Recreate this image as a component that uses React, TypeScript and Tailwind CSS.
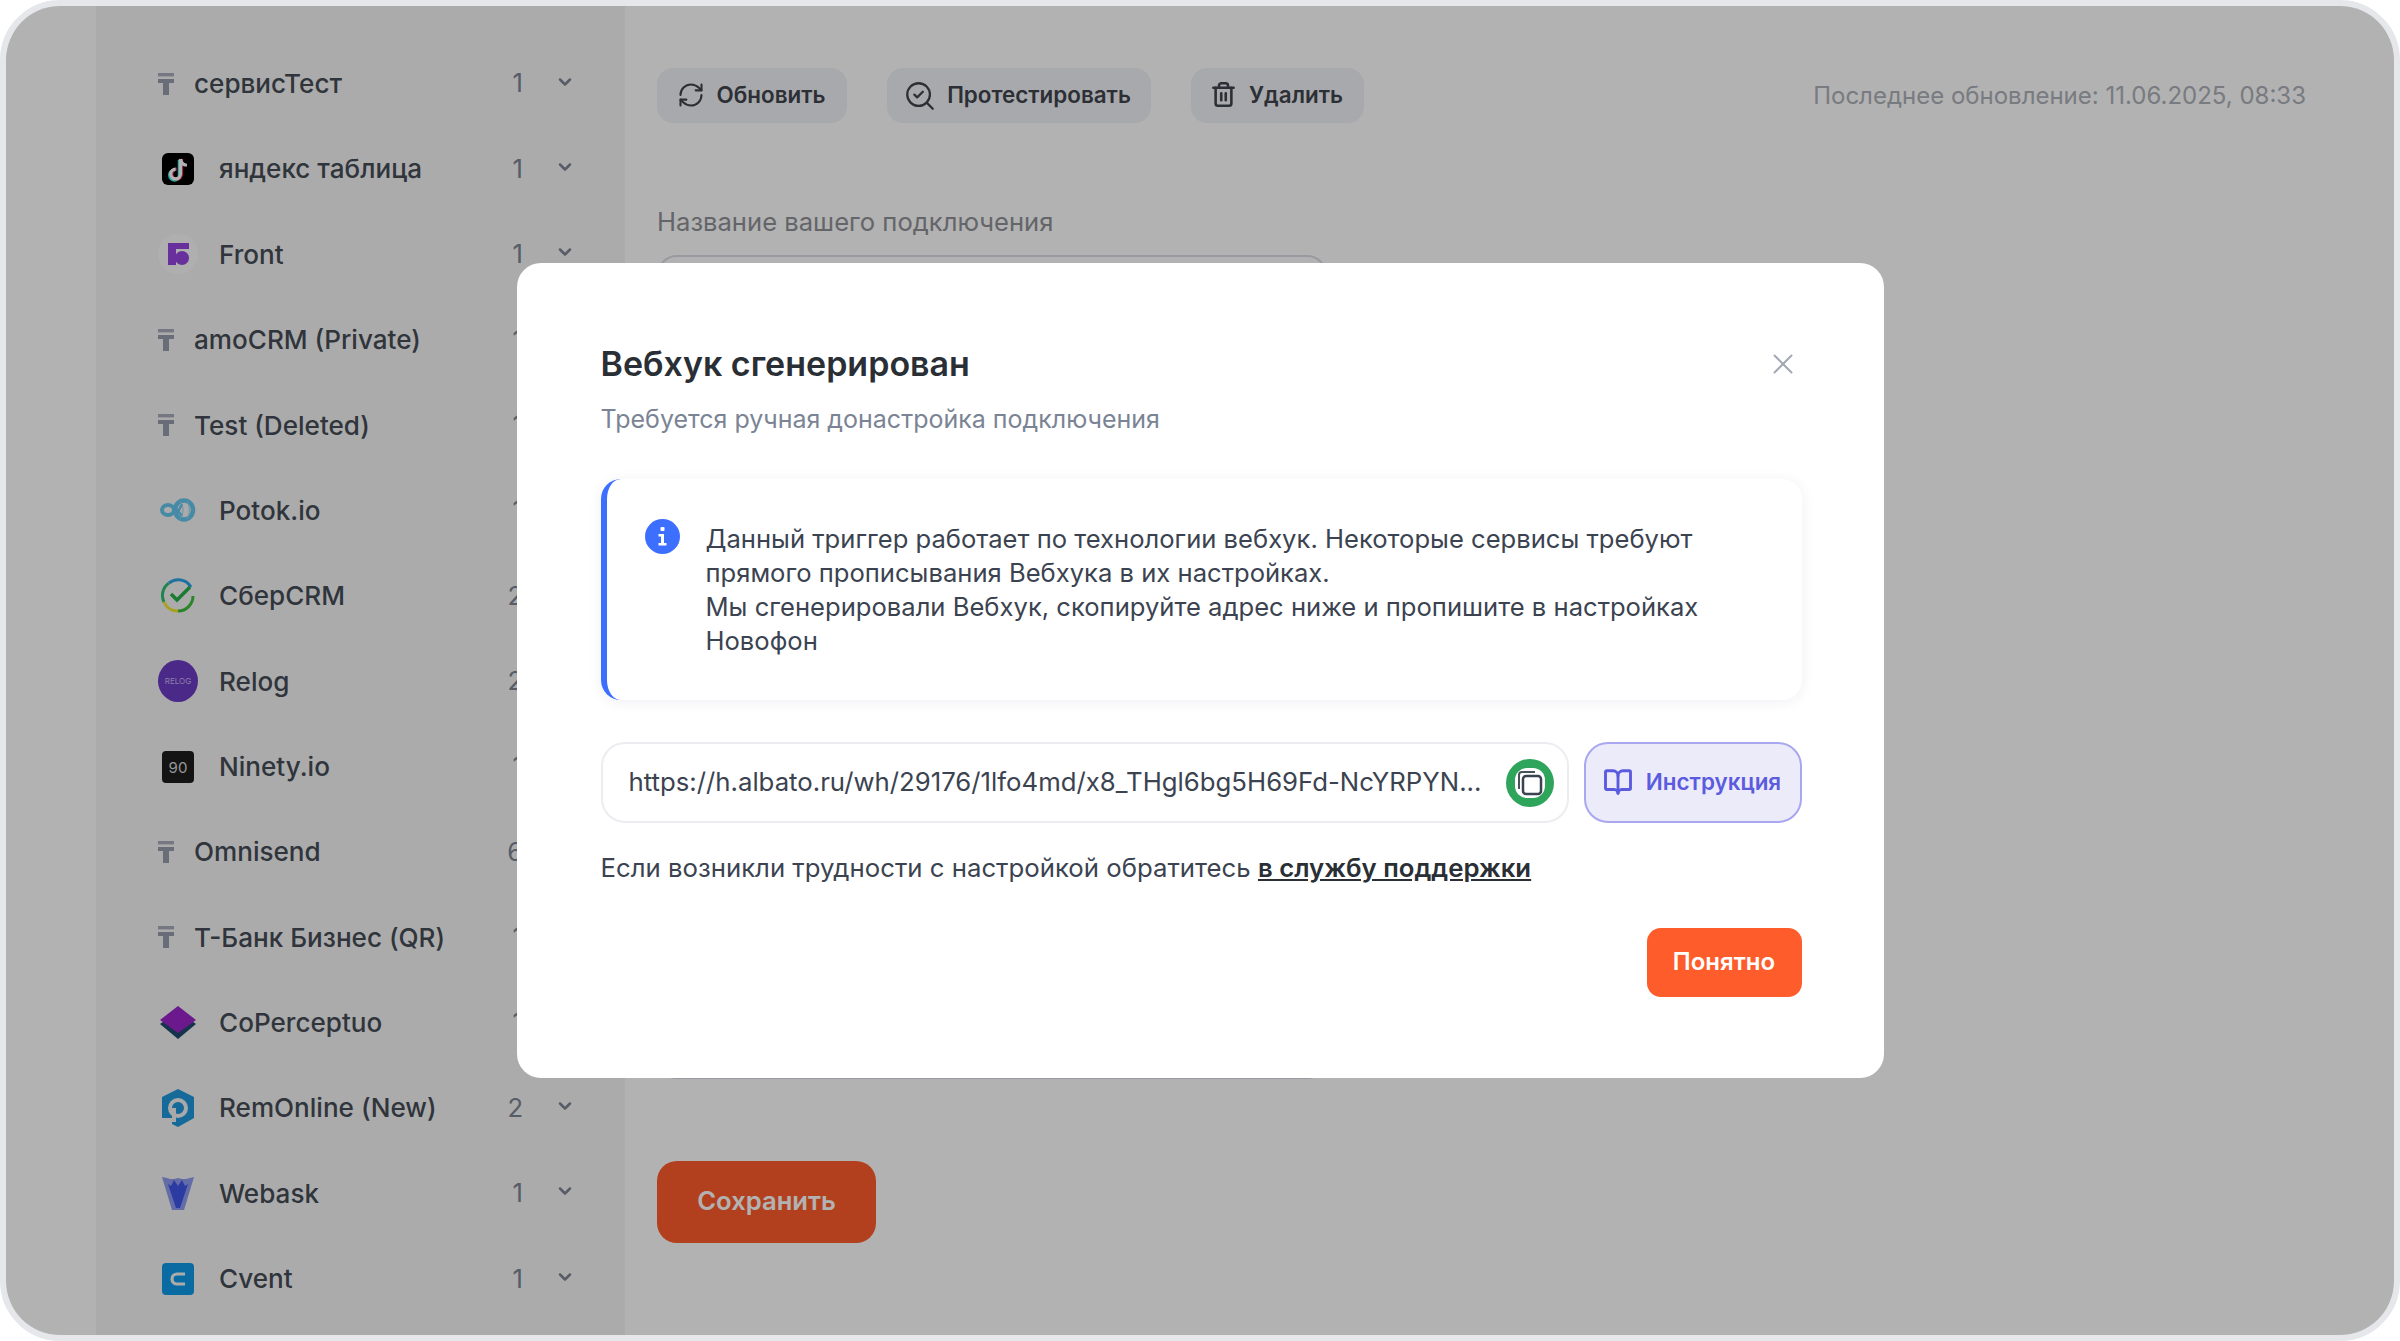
import React from "react";
import { RefreshCw, SearchCheck, Trash2, BookOpen, X, ChevronDown } from "lucide-react";

const TIcon = () => (
  <svg width="16" height="22" viewBox="0 0 16 22" className="shrink-0 mr-[4px]">
    <rect x="0" y="0" width="16" height="3.4" fill="#a8adbb" />
    <rect x="0" y="6" width="16" height="4" fill="#969cad" />
    <rect x="5" y="6" width="6" height="16" fill="#969cad" />
  </svg>
);

const TikTok = () => (
  <svg width="32" height="32" viewBox="0 0 32 32">
    <rect width="32" height="32" rx="6" fill="#000" />
    <g transform="translate(-1 -0.5) scale(1.08)">
      <path d="M18 6v14a4.5 4.5 0 1 1-4.5-4.5" fill="none" stroke="#25f4ee" strokeWidth="3" transform="translate(-1 1)" />
      <path d="M18 6v14a4.5 4.5 0 1 1-4.5-4.5" fill="none" stroke="#fe2c55" strokeWidth="3" transform="translate(1 0)" />
      <path d="M18 6v14a4.5 4.5 0 1 1-4.5-4.5" fill="none" stroke="#fff" strokeWidth="3" />
      <path d="M18 6c.5 3.5 3 5.500 6 5.800" fill="none" stroke="#fff" strokeWidth="3" />
    </g>
  </svg>
);

const Front = () => (
  <svg width="40" height="40" viewBox="0 0 40 40">
    <circle cx="20" cy="20" r="20" fill="#fbfbfb" />
    <path d="M10 9h21v6h-13v16h-8z" fill="#9645e0" />
    <circle cx="24" cy="24" r="7" fill="#9645e0" />
  </svg>
);

const Potok = () => (
  <svg width="36" height="24" viewBox="0 0 36 24" fill="none" stroke="#66c6ee">
    <ellipse cx="8" cy="12" rx="6" ry="5" strokeWidth="4" />
    <ellipse cx="24" cy="12" rx="9" ry="9.500" strokeWidth="4.500" />
    <path d="M14 8l8 10M22 6l-6 12" strokeWidth="2.500" />
    <path d="M20 3c4 5 4 13 0 18M27 3c3 5 3 13 0 18" stroke="#8fd8f4" strokeWidth="1" />
  </svg>
);

const Sber = () => (
  <svg width="34" height="36" viewBox="0 0 34 36" fill="none">
    <path d="M30 9A15 15 0 0 0 8 5" stroke="#2aa4e8" strokeWidth="3" />
    <path d="M8 5A15 15 0 0 0 3 24" stroke="#2fbf71" strokeWidth="3" />
    <path d="M3 24A15 15 0 0 0 17 33" stroke="#f2e52b" strokeWidth="3" />
    <path d="M17 33A15 15 0 0 0 32 18" stroke="#3fbe3d" strokeWidth="3" />
    <path d="M10 16l6 6L29 9" stroke="#26b14a" strokeWidth="3.500" />
  </svg>
);

const Relog = () => (
  <svg width="40" height="42" viewBox="0 0 40 42">
    <ellipse cx="20" cy="21" rx="20" ry="21" fill="#6b3cc4" />
    <text x="20" y="24" textAnchor="middle" fontSize="8" fill="#c9b6ee" fontFamily="Inter, sans-serif">RELOG</text>
  </svg>
);

const Ninety = () => (
  <svg width="32" height="32" viewBox="0 0 32 32">
    <rect width="32" height="32" rx="4" fill="#1d1d1d" />
    <text x="16" y="22" textAnchor="middle" fontSize="15" fill="#d8d8d8" fontFamily="Inter, sans-serif">90</text>
  </svg>
);

const CoPerceptuo = () => (
  <svg width="38" height="33" viewBox="0 0 38 33">
    <path d="M19 5L37 18 19 33 1 18z" fill="#1f4a6e" />
    <path d="M19 0L37 14 19 27 1 14z" fill="#9a24c9" />
  </svg>
);

const RemOnline = () => (
  <svg width="34" height="38" viewBox="0 0 34 38">
    <path d="M17 0L33 8v21l-16 9-6-3v-6l-10 0V8z" fill="#1f98dc" />
    <circle cx="17" cy="19" r="8" fill="none" stroke="#f2f2f2" strokeWidth="4" />
    <path d="M13 19v14" stroke="#f2f2f2" strokeWidth="4" />
    <circle cx="17" cy="19" r="2" fill="#1f98dc" />
  </svg>
);

const Webask = () => (
  <svg width="32" height="34" viewBox="0 0 32 34">
    <path d="M0 1l5 1 3 1 4 0 4-1 4 1 4 0 8-2-10 33h-12z" fill="#8f9bf0" />
    <path d="M6 8l3 2 3-6 4 6 4-6 3 6 3-2-8 24h-4z" fill="#3f55e8" />
  </svg>
);

const Cvent = () => (
  <svg width="32" height="32" viewBox="0 0 32 32">
    <rect width="32" height="32" rx="4" fill="#0d9ae8" />
    <path d="M23 11h-8a5 5 0 0 0 0 10h8" fill="none" stroke="#f5f5f5" strokeWidth="3.200" />
  </svg>
);

const rows: { name: string; count: string; icon?: React.ReactNode }[] = [
  { name: "сервисТест", count: "1" },
  { name: "яндекс таблица", count: "1", icon: <TikTok /> },
  { name: "Front", count: "1", icon: <Front /> },
  { name: "amoCRM (Private)", count: "1" },
  { name: "Test (Deleted)", count: "1" },
  { name: "Potok.io", count: "1", icon: <Potok /> },
  { name: "СберCRM", count: "2", icon: <Sber /> },
  { name: "Relog", count: "2", icon: <Relog /> },
  { name: "Ninety.io", count: "1", icon: <Ninety /> },
  { name: "Omnisend", count: "6" },
  { name: "Т-Банк Бизнес (QR)", count: "1" },
  { name: "CoPerceptuo", count: "1", icon: <CoPerceptuo /> },
  { name: "RemOnline (New)", count: "2", icon: <RemOnline /> },
  { name: "Webask", count: "1", icon: <Webask /> },
  { name: "Cvent", count: "1", icon: <Cvent /> },
];

const ToolButton = ({ icon, label, w }: { icon: React.ReactNode; label: string; w: string }) => (
  <button className={`flex h-[55px] items-center justify-center gap-[14px] rounded-[16px] bg-[#f1f3f6] pb-[2px] text-[22.4px] font-semibold text-[#3f444c] ${w}`}>
    {icon}
    {label}
  </button>
);

export default function App() {
  return (
    <div className="h-[1341px] w-[2400px] bg-white font-['Inter',sans-serif]">
      <div className="relative flex h-[1341px] w-[2400px] overflow-hidden rounded-[60px] border-[6px] border-[#e6e7eb] bg-white">
        <div className="w-[90px] shrink-0" />
        <aside className="flex w-[529px] shrink-0 flex-col bg-[#f5f5f5] pt-[35px]">
          {rows.map((r) => (
            <div key={r.name} className="flex h-[85.36px] shrink-0 items-center pl-[62px] pr-[50px]">
              {r.icon ? (
                <div className="mr-[21px] flex h-[40px] w-[40px] shrink-0 items-center justify-center">{r.icon}</div>
              ) : (
                <div className="mr-[16px] flex shrink-0 items-center"><TIcon /></div>
              )}
              <span className="flex-1 whitespace-nowrap text-[26.1px] font-medium text-[#454c57]">{r.name}</span>
              <span className="text-[25.6px] text-[#7d8494]">{r.count}</span>
              <ChevronDown size={20} strokeWidth={3} className="mb-[4px] ml-[32px] text-[#7d8494]" />
            </div>
          ))}
        </aside>
        <main className="flex min-w-0 flex-1 flex-col pl-[32px] pr-[88px] pt-[62px]">
          <header className="flex items-center justify-between">
            <div className="flex gap-[40px]">
              <ToolButton w="w-[190px]" icon={<RefreshCw size={28} strokeWidth={1.800} className="-mx-[2px]" />} label="Обновить" />
              <ToolButton w="w-[264px]" icon={<SearchCheck size={34} strokeWidth={1.600} className="-mx-[4px] mt-[2px]" />} label="Протестировать" />
              <ToolButton w="w-[173px]" icon={<Trash2 size={27} strokeWidth={2.300} className="-mx-[2px]" />} label="Удалить" />
            </div>
            <span className="text-[24px] text-[#adb0b8]">Последнее обновление: 11.06.2025, 08:33</span>
          </header>
          <label className="mt-[82px] text-[25.6px] leading-[34px] text-[#8f9197]">Название вашего подключения</label>
          <div className="mt-[16px] h-[824px] w-[670px] shrink-0 rounded-[20px] border-2 border-[#dcdce6]" />
          <button className="mt-[82px] h-[82px] w-[219px] rounded-[20px] bg-[#ff5c2b] pb-[2px] text-[25.6px] font-semibold text-white">Сохранить</button>
        </main>
        <div className="absolute inset-0 flex items-center justify-center bg-black/30">
          <div className="w-[1367px] rounded-[24px] bg-white pb-[81px] pl-[84px] pr-[82px] pt-[78px]">
            <div className="flex h-[44px] items-center justify-between">
              <h2 className="text-[34px] font-semibold text-[#2a2f36]">Вебхук сгенерирован</h2>
              <X size={34} strokeWidth={1.400} className="mr-[2px] mt-[2px] text-[#a3a8b4]" />
            </div>
            <p className="mt-[17px] text-[25px] leading-[34px] text-[#7b8494]">Требуется ручная донастройка подключения</p>
            <div className="mt-[43px] flex h-[221px] rounded-[20px] border-l-[6px] border-[#3d6fff] pl-[38px] pr-[50px] pt-[40px] shadow-[0_2px_14px_rgba(30,40,80,0.07)]">
              <svg width="35" height="35" viewBox="0 0 35 35" className="shrink-0">
                <circle cx="17.500" cy="17.500" r="17.500" fill="#3d6fff" />
                <rect x="15.500" y="8" width="4" height="4" rx="1" fill="#fff" />
                <path d="M13.500 15h5.500v9h2.500v2.500h-8V24h2.500v-6.500h-2.500z" fill="#fff" />
              </svg>
              <div className="ml-[26px] pt-[3px] text-[25.6px] leading-[34px] text-[#3b4350]">
                <p>Данный триггер работает по технологии вебхук. Некоторые сервисы требуют прямого прописывания Вебхука в их настройках.</p>
                <p>Мы сгенерировали Вебхук, скопируйте адрес ниже и пропишите в настройках Новофон</p>
              </div>
            </div>
            <div className="mt-[42px] flex h-[81px] gap-[15px]">
              <div className="flex min-w-0 flex-1 items-center justify-between rounded-[24px] border-2 border-[#ecedf1] pl-[26px] pr-[13px]">
                <span className="whitespace-nowrap text-[25.75px] text-[#3b4350]">https://h.albato.ru/wh/29176/1lfo4md/x8_THgl6bg5H69Fd-NcYRPYN...</span>
                <span className="flex h-[48px] w-[48px] items-center justify-center rounded-full bg-[#2ea55b]">
                  <svg width="32" height="32" viewBox="0 0 32 32" fill="none">
                    <rect x="1" y="1" width="30" height="30" rx="12" fill="#fff" />
                    <path d="M5 22V8a3 3 0 0 1 3-3h13" stroke="#4a5058" strokeWidth="2" />
                    <rect x="9" y="9" width="18" height="18" rx="3" stroke="#3b4350" strokeWidth="2.500" fill="#fff" />
                  </svg>
                </span>
              </div>
              <button className="flex w-[218px] shrink-0 items-center justify-center gap-[14px] rounded-[24px] border-2 border-[#a9a7f0] bg-[#ecebfa] pb-[2px] text-[22.4px] font-semibold text-[#5b5be0]">
                <BookOpen size={30} strokeWidth={2.300} className="-mx-[1px]" />
                Инструкция
              </button>
            </div>
            <p className="mt-[28px] text-[25.75px] leading-[34px] text-[#3b4350]">
              Если возникли трудности с настройкой обратитесь{" "}
              <a className="font-semibold text-[#2a2f36] underline">в службу поддержки</a>
            </p>
            <div className="mt-[43px] flex justify-end">
              <button className="h-[69px] w-[155px] rounded-[14px] bg-[#ff5c2b] pb-[2px] text-[24px] font-semibold text-white">Понятно</button>
            </div>
          </div>
        </div>
      </div>
    </div>
  );
}
